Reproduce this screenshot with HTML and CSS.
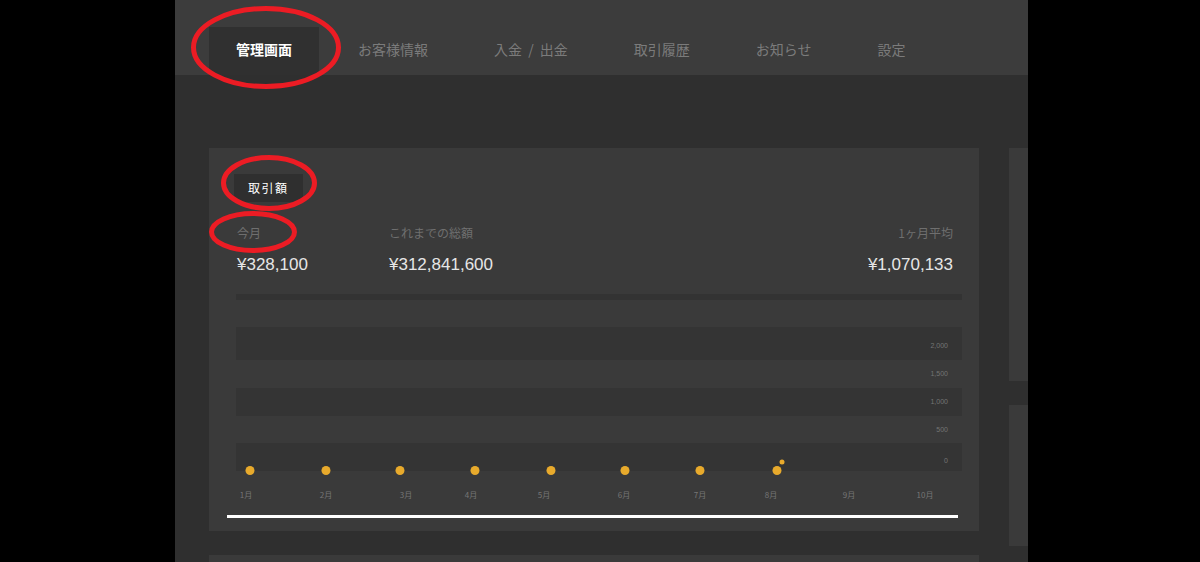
FILE: index.html
```html
<!DOCTYPE html>
<html lang="ja">
<head>
<meta charset="utf-8">
<title>管理画面</title>
<link rel="stylesheet" href="styles.css">
</head>
<body>
<div class="app">
  <header class="header">
    <nav class="nav">
      <a class="tab active">管理画面</a>
      <a class="tab">お客様情報</a>
      <a class="tab tab-wide">入金 / 出金</a>
      <a class="tab">取引履歴</a>
      <a class="tab">お知らせ</a>
      <a class="tab">設定</a>
    </nav>
  </header>
  <main class="content">
    <div class="col-main">
      <section class="card card-trade">
        <div class="tag">取引額</div>
        <div class="stats">
          <div class="stat">
            <div class="stat-label">今月</div>
            <div class="stat-value">¥328,100</div>
          </div>
          <div class="stat">
            <div class="stat-label">これまでの総額</div>
            <div class="stat-value">¥312,841,600</div>
          </div>
          <div class="stat stat-right">
            <div class="stat-label">1ヶ月平均</div>
            <div class="stat-value">¥1,070,133</div>
          </div>
        </div>
        <div class="divider"></div>
        <svg class="chart" width="735" height="218" viewBox="0 0 735 218">
          <rect x="9" y="27" width="726" height="33" fill="#343434"/>
          <rect x="9" y="88" width="726" height="28" fill="#343434"/>
          <rect x="9" y="143" width="726" height="28" fill="#343434"/>
          <g class="ylab" text-anchor="end">
            <text x="721" y="48">2,000</text>
            <text x="721" y="76">1,500</text>
            <text x="721" y="104">1,000</text>
            <text x="721" y="132">500</text>
            <text x="721" y="163">0</text>
          </g>
          <g class="xlab" text-anchor="middle">
            <text x="19" y="198">1月</text>
            <text x="99" y="198">2月</text>
            <text x="179" y="198">3月</text>
            <text x="244" y="198">4月</text>
            <text x="317" y="198">5月</text>
            <text x="397" y="198">6月</text>
            <text x="473" y="198">7月</text>
            <text x="544" y="198">8月</text>
            <text x="622" y="198">9月</text>
            <text x="698" y="198">10月</text>
          </g>
          <g fill="#e8aa2c">
            <circle cx="23" cy="170.5" r="4.5"/>
            <circle cx="99" cy="170.5" r="4.5"/>
            <circle cx="173" cy="170.5" r="4.5"/>
            <circle cx="248" cy="170.5" r="4.5"/>
            <circle cx="324" cy="170.5" r="4.5"/>
            <circle cx="398" cy="170.5" r="4.5"/>
            <circle cx="473" cy="170.5" r="4.5"/>
            <circle cx="550" cy="170.5" r="4.5"/>
            <circle cx="555" cy="162" r="2.5"/>
          </g>
          <rect x="0" y="215" width="731" height="3" fill="#ffffff"/>
        </svg>
      </section>
      <section class="card card-next"></section>
    </div>
    <div class="col-side">
      <section class="card side-a"></section>
      <section class="card side-b"></section>
      <section class="card side-c"></section>
    </div>
  </main>
</div>
<svg class="marks" width="1200" height="562" viewBox="0 0 1200 562">
  <g fill="none" stroke="#ec1c24" stroke-width="5">
    <ellipse cx="266" cy="47.5" rx="72.5" ry="39"/>
    <ellipse cx="269" cy="183" rx="45.5" ry="25.5"/>
    <ellipse cx="253" cy="232" rx="41.5" ry="18.5"/>
  </g>
</svg>
</body>
</html>
```
FILE: styles.css
```css
* { box-sizing: border-box; }
html, body { margin: 0; padding: 0; }
body {
  background: #000;
  font-family: "Noto Sans CJK JP", "Noto Sans", sans-serif;
  height: 562px;
  overflow: hidden;
  position: relative;
}
.app {
  width: 853px;
  height: 562px;
  margin-left: 175px;
  background: #2f2f2f;
  overflow: hidden;
}
.header {
  height: 75px;
  background: #3c3c3c;
  display: flex;
  align-items: flex-end;
}
.nav {
  display: flex;
  gap: 12px;
  padding-left: 34px;
}
.tab {
  height: 48px;
  padding: 0 27px 4px;
  display: flex;
  align-items: center;
  font-size: 14px;
  line-height: 20px;
  color: #7b7b7b;
  white-space: nowrap;
}
.tab-wide { word-spacing: 3px; }
.tab.active {
  background: #303030;
  color: #ffffff;
  font-weight: 700;
}
.content {
  display: flex;
  gap: 30px;
  padding: 73px 0 0 34px;
}
.col-main {
  flex: none;
  width: 770px;
  display: flex;
  flex-direction: column;
  gap: 24px;
}
.col-side {
  flex: none;
  width: 300px;
  display: flex;
  flex-direction: column;
  gap: 24px;
}
.card { background: #3a3a3a; }
.card-trade {
  padding: 26px 17px 13px 18px;
  display: flex;
  flex-direction: column;
}
.card-next { height: 300px; }
.side-a { height: 233px; }
.side-b { height: 141px; }
.side-c { height: 200px; }
.tag {
  align-self: flex-start;
  margin-left: 7px;
  height: 28px;
  line-height: 28px;
  padding: 0 14px;
  background: #2f2f2f;
  color: #ffffff;
  font-size: 12px;
  letter-spacing: 1.5px;
}
.stats {
  display: flex;
  margin: 22px 9px 0 10px;
}
.stat { width: 152px; }
.stat-right { margin-left: auto; text-align: right; width: auto; }
.stat-label {
  font-size: 12px;
  line-height: 18px;
  color: #6f6f6f;
}
.stat-value {
  margin-top: 12px;
  font-family: "Liberation Sans", sans-serif;
  font-size: 17px;
  line-height: 22px;
  font-weight: 400;
  color: #e6e6e6;
  white-space: nowrap;
}
.divider {
  margin: 18px 0 0 9px;
  height: 6px;
  background: #333333;
}
.chart { display: block; }
.ylab text {
  font-family: "Liberation Sans", sans-serif;
  font-size: 7px;
  fill: #747474;
}
.xlab text {
  font-family: "Noto Sans CJK JP", sans-serif;
  font-size: 8px;
  fill: #767676;
}
.marks {
  position: absolute;
  left: 0;
  top: 0;
  pointer-events: none;
}
```
